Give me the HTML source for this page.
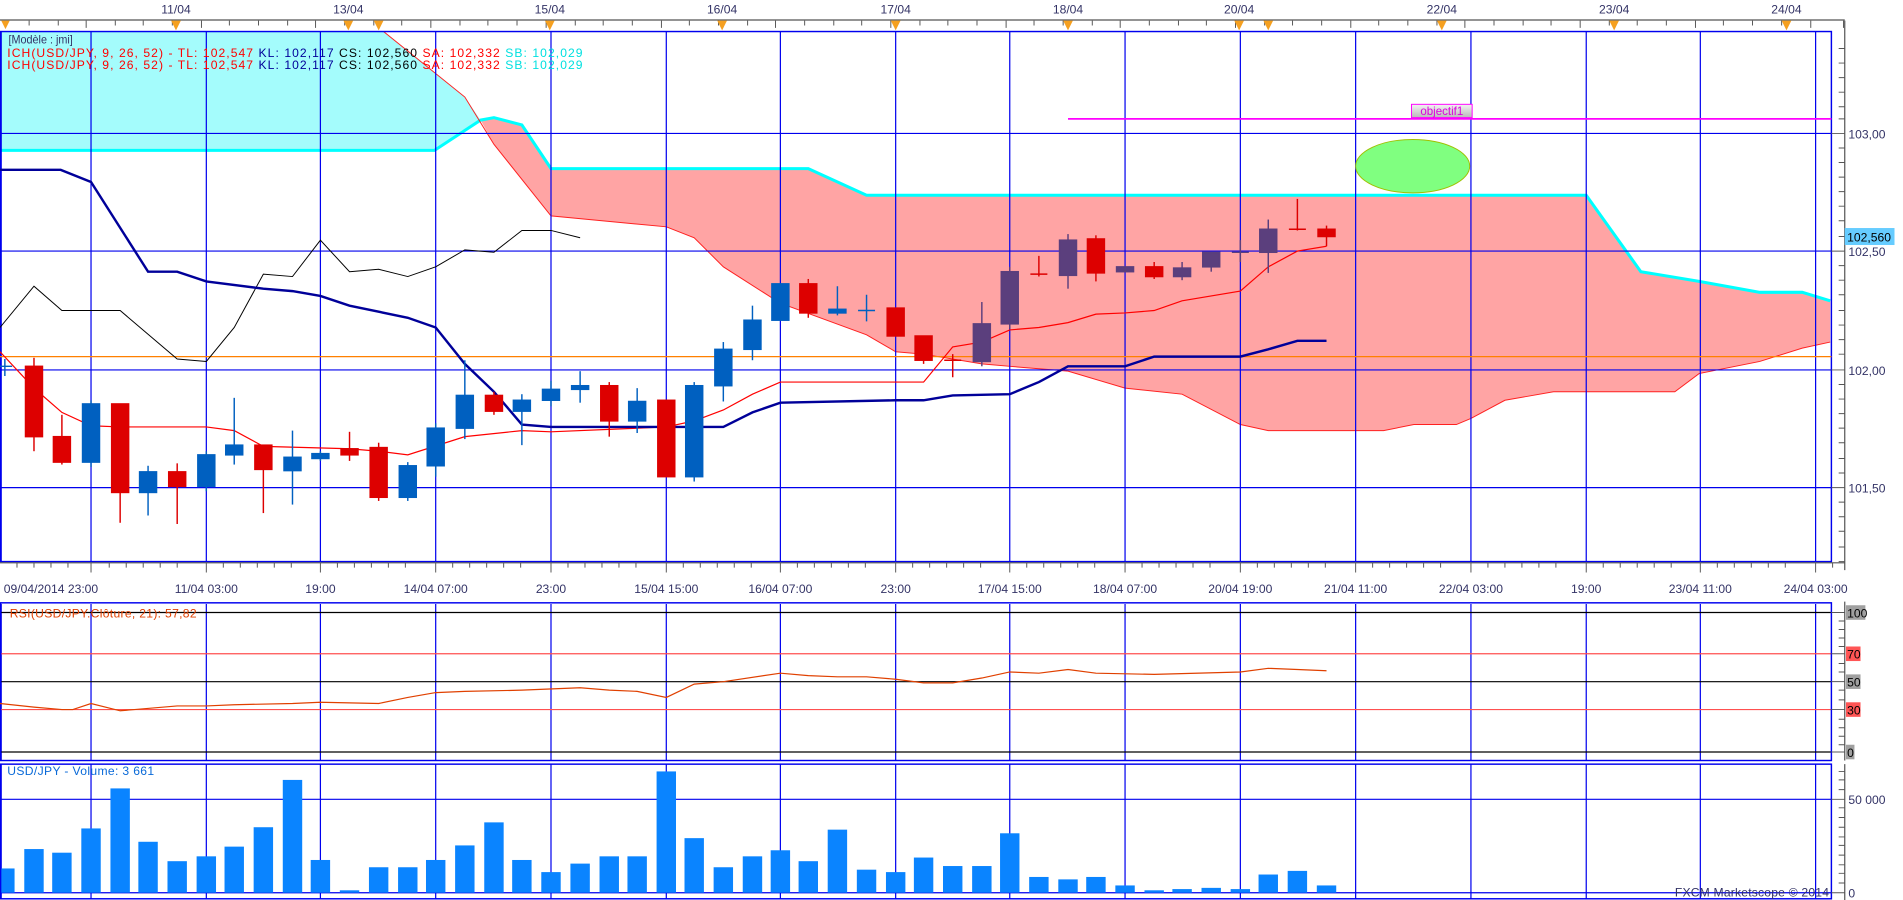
<!DOCTYPE html>
<html><head><meta charset="utf-8">
<style>
html,body{margin:0;padding:0;background:#fff;overflow:hidden}
svg{display:block}
text{font-family:"Liberation Sans",sans-serif}
</style></head>
<body>
<svg width="1903" height="900" viewBox="0 0 1568 742" preserveAspectRatio="none" xmlns="http://www.w3.org/2000/svg">
<rect width="1568" height="742" fill="#fff"/>

<!-- top axis -->
<g font-size="10" fill="#333366" text-anchor="middle">
<text x="145" y="11">11/04</text><text x="287" y="11">13/04</text><text x="453" y="11">15/04</text>
<text x="595" y="11">16/04</text><text x="738" y="11">17/04</text><text x="880" y="11">18/04</text>
<text x="1021" y="11">20/04</text><text x="1188" y="11">22/04</text><text x="1330" y="11">23/04</text>
<text x="1472" y="11">24/04</text>
</g>
<line x1="0" y1="16.5" x2="1520" y2="16.5" stroke="#555" stroke-width="1"/>
<g stroke="#555" stroke-width="0.8">
<path d="M24 17v4M48 17v4M71 17v6M95 17v4M118 17v4M142 17v4M166 17v6M189 17v4M213 17v4M237 17v4M260 17v6M284 17v4M308 17v4M331 17v4M355 17v6M379 17v4M402 17v4M426 17v4M450 17v6M474 17v4M497 17v4M521 17v4M545 17v6M568 17v4M592 17v4M616 17v4M639 17v6M663 17v4M687 17v4M710 17v4M734 17v6M758 17v4M781 17v4M805 17v4M829 17v6M852 17v4M876 17v4M900 17v4M923 17v6M947 17v4M971 17v4M994 17v4M1018 17v6M1042 17v4M1065 17v4M1089 17v4M1113 17v6M1136 17v4M1160 17v4M1184 17v4M1207 17v6M1231 17v4M1255 17v4M1278 17v4M1302 17v6M1326 17v4M1349 17v4M1373 17v4M1397 17v6M1420 17v4M1444 17v4M1468 17v4M1492 17v6M1519 17v6"/>
</g>
<g fill="#f5a020">
<path d="M1 17h7l-3.5 7z"/><path d="M141 17h8l-4 8z"/><path d="M283 17h8l-4 8z"/><path d="M308 17h8l-4 8z"/>
<path d="M449 17h8l-4 8z"/><path d="M591 17h8l-4 8z"/><path d="M734 17h8l-4 8z"/><path d="M876 17h8l-4 8z"/>
<path d="M1017 17h8l-4 8z"/><path d="M1041 17h8l-4 8z"/><path d="M1184 17h8l-4 8z"/><path d="M1326 17h8l-4 8z"/><path d="M1468 17h8l-4 8z"/>
</g>

<!-- cloud -->
<polygon points="0,26 316,26 383,80 396,99 380,108 358,124 0,124" fill="#a4fcfc"/>
<polygon points="396,99 407,97 430,103 454,139 666,139 714,161 1307,161 1352,224 1400,232 1450,241 1485,241 1508,248 1508,282 1485,287 1450,298 1400,308 1380,323 1280,323 1240,330 1212,345 1200,350 1165,350 1140,355 1045,355 1022,350 974,325 927,320 880,306 832,302 809,300 761,292 738,290 714,276 643,250 596,220 572,196 549,187 454,178 407,119" fill="#ffa4a4"/>
<polyline points="0,124 358,124 396,99 407,97 430,103 454,139 666,139 714,161 1307,161 1352,224 1400,232 1450,241 1485,241 1508,248" fill="none" stroke="#00ffff" stroke-width="2.5"/>
<polyline points="316,26 383,80 407,119 454,178 549,187 572,196 596,220 643,250 714,276 738,290 761,292 809,300 832,302 880,306 927,320 974,325 1022,350 1045,355 1140,355 1165,350 1200,350 1212,345 1240,330 1280,323 1380,323 1400,308 1450,298 1485,287 1508,282" fill="none" stroke="#ff2020" stroke-width="0.8"/>

<!-- grid -->
<g stroke="#0000ee" stroke-width="1">
<path d="M0 110H1509M0 207H1509M0 305H1509M0 402H1509"/>
<path d="M1 26V463M75 26V463M170 26V463M264 26V463M359 26V463M454 26V463M549 26V463M643 26V463M738 26V463M832 26V463M927 26V463M1022 26V463M1117 26V463M1212 26V463M1307 26V463M1401 26V463M1496 26V463"/>
</g>
<rect x="0.5" y="26" width="1508.5" height="437" fill="none" stroke="#0000ee" stroke-width="1.2"/>
<line x1="0" y1="294" x2="1509" y2="294" stroke="#ff8000" stroke-width="1"/>

<polyline points="0,270 28,236 51,256 75,256 99,256 146,296 170,298 193,270 217,226 241,228 264,198 288,224 312,222 336,228 359,220 383,206 407,208 430,190 454,190 478,196" fill="none" stroke="#000" stroke-width="0.8"/>
<polyline points="0,290 28,320 51,340 75,351 99,352 146,352 170,352 193,355 217,368 288,370 312,372 336,375 383,360 430,355 454,356 549,352 572,347 596,338 620,325 643,315 738,315 761,315 785,286 809,282 832,272 856,270 880,266 903,259 927,258 951,256 974,248 1022,240 1045,220 1069,207 1093,203" fill="none" stroke="#ff0000" stroke-width="1"/>
<polyline points="0,140 50,140 75,150 122,224 146,224 170,232 217,238 241,240 264,244 288,252 336,262 359,270 383,300 407,323 430,350 454,352 596,352 620,340 643,332 738,330 761,330 785,326 832,325 856,315 880,302 927,302 951,294 1022,294 1045,288 1069,281 1093,281" fill="none" stroke="#000099" stroke-width="2"/>

<!-- candles -->
<g stroke-width="1.2">
<g stroke="#0060c0" fill="#0060c0">
<path d="M4 296v14M-2 302h12"/>
<line x1="75" y1="330" x2="75" y2="385"/><rect x="68" y="333" width="14" height="48"/>
<line x1="122" y1="384" x2="122" y2="425"/><rect x="115" y="389" width="14" height="17"/>
<line x1="170" y1="372" x2="170" y2="405"/><rect x="163" y="375" width="14" height="26"/>
<line x1="193" y1="328" x2="193" y2="383"/><rect x="186" y="367" width="14" height="8"/>
<line x1="241" y1="355" x2="241" y2="416"/><rect x="234" y="377" width="14" height="11"/>
<line x1="264" y1="372" x2="264" y2="380"/><rect x="257" y="374" width="14" height="4"/>
<line x1="336" y1="381" x2="336" y2="413"/><rect x="329" y="384" width="14" height="26"/>
<line x1="359" y1="349" x2="359" y2="393"/><rect x="352" y="353" width="14" height="31"/>
<line x1="383" y1="297" x2="383" y2="362"/><rect x="376" y="326" width="14" height="27"/>
<line x1="430" y1="325" x2="430" y2="367"/><rect x="423" y="330" width="14" height="9"/>
<line x1="454" y1="314" x2="454" y2="335"/><rect x="447" y="321" width="14" height="9"/>
<line x1="478" y1="306" x2="478" y2="332"/><rect x="471" y="318" width="14" height="3"/>
<line x1="525" y1="320" x2="525" y2="357"/><rect x="518" y="331" width="14" height="16"/>
<line x1="572" y1="315" x2="572" y2="397"/><rect x="565" y="318" width="14" height="75"/>
<line x1="596" y1="282" x2="596" y2="331"/><rect x="589" y="288" width="14" height="30"/>
<line x1="620" y1="252" x2="620" y2="297"/><rect x="613" y="264" width="14" height="24"/>
<rect x="636" y="234" width="14" height="30"/>
<line x1="690" y1="236" x2="690" y2="260"/><rect x="683" y="255" width="14" height="3"/>
<path d="M714 243v22M707 256h14"/>
</g>
<g stroke="#5b3f7d" fill="#5b3f7d">
<line x1="809" y1="249" x2="809" y2="302"/><rect x="802" y="267" width="14" height="31"/>
<line x1="832" y1="220" x2="832" y2="271"/><rect x="825" y="224" width="14" height="43"/>
<line x1="880" y1="193" x2="880" y2="238"/><rect x="873" y="198" width="14" height="29"/>
<rect x="920" y="220" width="14" height="4"/>
<line x1="974" y1="216" x2="974" y2="231"/><rect x="967" y="221" width="14" height="7"/>
<line x1="998" y1="208" x2="998" y2="224"/><rect x="991" y="208" width="14" height="12"/>
<path d="M1022 198v18M1015 208h14"/>
<line x1="1045" y1="181" x2="1045" y2="225"/><rect x="1038" y="189" width="14" height="19"/>
</g>
<g stroke="#dd0000" fill="#dd0000">
<line x1="28" y1="295" x2="28" y2="372"/><rect x="21" y="302" width="14" height="58"/>
<line x1="51" y1="342" x2="51" y2="383"/><rect x="44" y="360" width="14" height="21"/>
<line x1="99" y1="333" x2="99" y2="431"/><rect x="92" y="333" width="14" height="73"/>
<line x1="146" y1="382" x2="146" y2="432"/><rect x="139" y="389" width="14" height="12"/>
<line x1="217" y1="367" x2="217" y2="423"/><rect x="210" y="367" width="14" height="20"/>
<line x1="288" y1="356" x2="288" y2="380"/><rect x="281" y="370" width="14" height="5"/>
<line x1="312" y1="365" x2="312" y2="413"/><rect x="305" y="369" width="14" height="41"/>
<line x1="407" y1="323" x2="407" y2="342"/><rect x="400" y="326" width="14" height="13"/>
<line x1="502" y1="315" x2="502" y2="360"/><rect x="495" y="318" width="14" height="29"/>
<rect x="542" y="330" width="14" height="63"/>
<line x1="666" y1="230" x2="666" y2="262"/><rect x="659" y="234" width="14" height="24"/>
<rect x="731" y="254" width="14" height="23"/>
<line x1="761" y1="277" x2="761" y2="300"/><rect x="754" y="277" width="14" height="20"/>
<path d="M785 292v19M778 297h14"/>
<path d="M856 211v17M849 226h14"/>
<line x1="903" y1="194" x2="903" y2="232"/><rect x="896" y="197" width="14" height="28"/>
<line x1="951" y1="216" x2="951" y2="230"/><rect x="944" y="220" width="14" height="8"/>
<path d="M1069 164v26M1062 189h14"/>
<line x1="1093" y1="186" x2="1093" y2="203"/><rect x="1086" y="189" width="14" height="6"/>
</g>
</g>

<!-- objective -->
<line x1="880" y1="98" x2="1509" y2="98" stroke="#ff00ff" stroke-width="1.5"/>
<defs><linearGradient id="gg" x1="0" y1="0" x2="0" y2="1"><stop offset="0" stop-color="#f4f4f4"/><stop offset="1" stop-color="#b8b8b8"/></linearGradient></defs>
<rect x="1163" y="86" width="50" height="11" fill="url(#gg)" stroke="#ff00ff" stroke-width="0.8"/>
<text x="1188" y="95" font-size="9.5" fill="#dd00dd" text-anchor="middle">objectif1</text>
<ellipse cx="1164" cy="137" rx="47" ry="22" fill="#80ff80" stroke="#a0c000" stroke-width="0.8"/>

<!-- legend -->
<g font-size="10">
<text x="7" y="36" fill="#333366" textLength="53" lengthAdjust="spacingAndGlyphs">[Modèle : jmi]</text>
<text x="6" y="47" textLength="474" lengthAdjust="spacing"><tspan fill="#ff0000">ICH(USD/JPY, 9, 26, 52) -  TL: 102,547  </tspan><tspan fill="#000099">KL: 102,117  </tspan><tspan fill="#000">CS: 102,560  </tspan><tspan fill="#ff0000">SA: 102,332  </tspan><tspan fill="#00e0e0">SB: 102,029</tspan></text>
<text x="6" y="57" textLength="474" lengthAdjust="spacing"><tspan fill="#ff0000">ICH(USD/JPY, 9, 26, 52) -  TL: 102,547  </tspan><tspan fill="#000099">KL: 102,117  </tspan><tspan fill="#000">CS: 102,560  </tspan><tspan fill="#ff0000">SA: 102,332  </tspan><tspan fill="#00e0e0">SB: 102,029</tspan></text>
</g>

<!-- right axis main -->
<line x1="1520" y1="17" x2="1520" y2="470" stroke="#555"/>
<g stroke="#555" stroke-width="0.8">
<path d="M1515 40h5M1515 52h5M1515 64h5M1515 76h5M1515 88h5M1515 98h5M1509 110h11M1515 122h5M1515 134h5M1515 146h5M1515 158h5M1515 170h5M1515 182h5M1515 195h5M1509 207h11M1515 219h5M1515 231h5M1515 243h5M1515 256h5M1515 268h5M1515 280h5M1515 292h5M1509 305h11M1515 317h5M1515 329h5M1515 341h5M1515 353h5M1515 365h5M1515 378h5M1515 390h5M1509 402h11M1515 414h5M1515 426h5M1515 438h5M1515 451h5M1515 463h5"/>
</g>
<g font-size="10" fill="#333366">
<text x="1523" y="114">103,00</text><text x="1523" y="211">102,50</text><text x="1523" y="309">102,00</text><text x="1523" y="406">101,50</text>
</g>
<rect x="1520" y="188" width="41" height="14" fill="#66ccff"/>
<text x="1522" y="199" font-size="10" fill="#000">102,560</text>

<!-- bottom time axis -->
<line x1="0" y1="464" x2="1520" y2="464" stroke="#555"/>
<g stroke="#555" stroke-width="0.8">
<path d="M14 464v4M28 464v4M42 464v4M56 464v4M75 464v8M90 464v4M104 464v4M118 464v4M132 464v4M146 464v4M170 464v8M184 464v4M198 464v4M212 464v4M226 464v4M240 464v4M264 464v8M278 464v4M292 464v4M306 464v4M320 464v4M334 464v4M359 464v8M373 464v4M387 464v4M401 464v4M415 464v4M429 464v4M454 464v8M468 464v4M482 464v4M496 464v4M510 464v4M524 464v4M549 464v8M563 464v4M577 464v4M591 464v4M605 464v4M619 464v4M643 464v8M657 464v4M671 464v4M685 464v4M699 464v4M713 464v4M738 464v8M752 464v4M766 464v4M780 464v4M794 464v4M808 464v4M832 464v8M846 464v4M860 464v4M874 464v4M888 464v4M902 464v4M927 464v8M941 464v4M955 464v4M969 464v4M983 464v4M997 464v4M1022 464v8M1036 464v4M1050 464v4M1064 464v4M1078 464v4M1092 464v4M1117 464v8M1131 464v4M1145 464v4M1159 464v4M1173 464v4M1187 464v4M1212 464v8M1226 464v4M1240 464v4M1254 464v4M1268 464v4M1282 464v4M1307 464v8M1321 464v4M1335 464v4M1349 464v4M1363 464v4M1377 464v4M1401 464v8M1415 464v4M1429 464v4M1443 464v4M1457 464v4M1471 464v4M1496 464v8M1510 464v4"/>
</g>
<g font-size="10" fill="#333366" text-anchor="middle">
<text x="42" y="489">09/04/2014 23:00</text><text x="170" y="489">11/04 03:00</text><text x="264" y="489">19:00</text>
<text x="359" y="489">14/04 07:00</text><text x="454" y="489">23:00</text><text x="549" y="489">15/04 15:00</text>
<text x="643" y="489">16/04 07:00</text><text x="738" y="489">23:00</text><text x="832" y="489">17/04 15:00</text>
<text x="927" y="489">18/04 07:00</text><text x="1022" y="489">20/04 19:00</text><text x="1117" y="489">21/04 11:00</text>
<text x="1212" y="489">22/04 03:00</text><text x="1307" y="489">19:00</text><text x="1401" y="489">23/04 11:00</text>
<text x="1496" y="489">24/04 03:00</text>
</g>

<!-- RSI panel -->
<g stroke="#0000ee" stroke-width="1">
<path d="M1 498V627M75 498V627M170 498V627M264 498V627M359 498V627M454 498V627M549 498V627M643 498V627M738 498V627M832 498V627M927 498V627M1022 498V627M1117 498V627M1212 498V627M1307 498V627M1401 498V627M1496 498V627"/>
</g>
<g stroke-width="1">
<line x1="0" y1="505" x2="1509" y2="505" stroke="#000"/>
<line x1="0" y1="539" x2="1509" y2="539" stroke="#ff5050"/>
<line x1="0" y1="562" x2="1509" y2="562" stroke="#000"/>
<line x1="0" y1="585" x2="1509" y2="585" stroke="#ff5050"/>
<line x1="0" y1="620" x2="1509" y2="620" stroke="#000"/>
</g>
<rect x="0.5" y="497" width="1508.5" height="130" fill="none" stroke="#0000ee" stroke-width="1.2"/>
<polyline points="0,580 28,583 51,585 60,585 75,580 99,586 146,582 170,582 193,581 241,580 264,579 312,580 336,575 359,571 383,570 430,569 478,567 502,569 525,570 549,575 572,564 596,562 643,555 666,557 690,558 714,558 738,560 761,563 785,563 809,559 832,554 856,555 880,552 903,555 951,556 1022,554 1045,551 1069,552 1093,553" fill="none" stroke="#e04000" stroke-width="1"/>
<text x="8" y="509" font-size="10" fill="#e04000" textLength="154" lengthAdjust="spacing">RSI(USD/JPY.Clôture, 21): 57,82</text>
<line x1="1520" y1="496" x2="1520" y2="627" stroke="#555"/>
<g stroke="#555" stroke-width="0.8">
<path d="M1509 505h11M1515 512h5M1515 519h5M1515 526h5M1515 533h5M1509 539h11M1515 547h5M1515 554h5M1509 562h11M1515 569h5M1515 577h5M1509 585h11M1515 593h5M1515 600h5M1515 607h5M1515 614h5M1509 620h11"/>
</g>
<g font-size="10">
<rect x="1521" y="499" width="16" height="12" fill="#a0a0a0"/><text x="1522" y="509" fill="#000">100</text>
<rect x="1521" y="533" width="12" height="12" fill="#ff5555"/><text x="1522" y="543" fill="#000">70</text>
<rect x="1521" y="556" width="12" height="12" fill="#a0a0a0"/><text x="1522" y="566" fill="#000">50</text>
<rect x="1521" y="579" width="12" height="12" fill="#ff5555"/><text x="1522" y="589" fill="#000">30</text>
<rect x="1521" y="614" width="7" height="12" fill="#a0a0a0"/><text x="1522" y="624" fill="#000">0</text>
</g>

<!-- volume panel -->
<g stroke="#0000ee" stroke-width="1">
<path d="M1 630V741M75 630V741M170 630V741M264 630V741M359 630V741M454 630V741M549 630V741M643 630V741M738 630V741M832 630V741M927 630V741M1022 630V741M1117 630V741M1212 630V741M1307 630V741M1401 630V741M1496 630V741"/>
<path d="M0 659H1509M0 736H1509"/>
</g>
<g fill="#0a84ff">
<rect x="-4" y="716" width="16" height="20"/><rect x="20" y="700" width="16" height="36"/><rect x="43" y="703" width="16" height="33"/>
<rect x="67" y="683" width="16" height="53"/><rect x="91" y="650" width="16" height="86"/><rect x="114" y="694" width="16" height="42"/>
<rect x="138" y="710" width="16" height="26"/><rect x="162" y="706" width="16" height="30"/><rect x="185" y="698" width="16" height="38"/>
<rect x="209" y="682" width="16" height="54"/><rect x="233" y="643" width="16" height="93"/><rect x="256" y="709" width="16" height="27"/>
<rect x="280" y="734" width="16" height="2"/><rect x="304" y="715" width="16" height="21"/><rect x="328" y="715" width="16" height="21"/>
<rect x="351" y="709" width="16" height="27"/><rect x="375" y="697" width="16" height="39"/><rect x="399" y="678" width="16" height="58"/>
<rect x="422" y="709" width="16" height="27"/><rect x="446" y="719" width="16" height="17"/><rect x="470" y="712" width="16" height="24"/>
<rect x="494" y="706" width="16" height="30"/><rect x="517" y="706" width="16" height="30"/><rect x="541" y="636" width="16" height="100"/>
<rect x="564" y="691" width="16" height="45"/><rect x="588" y="715" width="16" height="21"/><rect x="612" y="706" width="16" height="30"/>
<rect x="635" y="701" width="16" height="35"/><rect x="658" y="710" width="16" height="26"/><rect x="682" y="684" width="16" height="52"/>
<rect x="706" y="717" width="16" height="19"/><rect x="730" y="719" width="16" height="17"/><rect x="753" y="707" width="16" height="29"/>
<rect x="777" y="714" width="16" height="22"/><rect x="801" y="714" width="16" height="22"/><rect x="824" y="687" width="16" height="49"/>
<rect x="848" y="723" width="16" height="13"/><rect x="872" y="725" width="16" height="11"/><rect x="895" y="723" width="16" height="13"/>
<rect x="919" y="730" width="16" height="6"/><rect x="943" y="734" width="16" height="2"/><rect x="966" y="733" width="16" height="3"/>
<rect x="990" y="732" width="16" height="4"/><rect x="1014" y="733" width="16" height="3"/><rect x="1037" y="721" width="16" height="15"/>
<rect x="1061" y="718" width="16" height="18"/><rect x="1085" y="730" width="16" height="6"/>
</g>
<rect x="0.5" y="630" width="1508.5" height="111" fill="none" stroke="#0000ee" stroke-width="1.2"/>
<text x="6" y="639" font-size="10" fill="#0a6ad8" textLength="121" lengthAdjust="spacing">USD/JPY - Volume: 3 661</text>
<text x="1380" y="739" font-size="10" fill="#333366" textLength="127" lengthAdjust="spacing">FXCM Marketscope © 2014</text>
<line x1="1520" y1="630" x2="1520" y2="742" stroke="#555"/>
<g stroke="#555" stroke-width="0.8">
<path d="M1515 636h5M1515 643h5M1515 651h5M1509 659h11M1515 666h5M1515 674h5M1515 682h5M1515 690h5M1515 697h5M1515 705h5M1515 713h5M1515 720h5M1515 728h5M1509 736h11"/>
</g>
<g font-size="10" fill="#333366">
<text x="1523" y="663">50 000</text><text x="1523" y="740">0</text>
</g>
</svg>
</body></html>
